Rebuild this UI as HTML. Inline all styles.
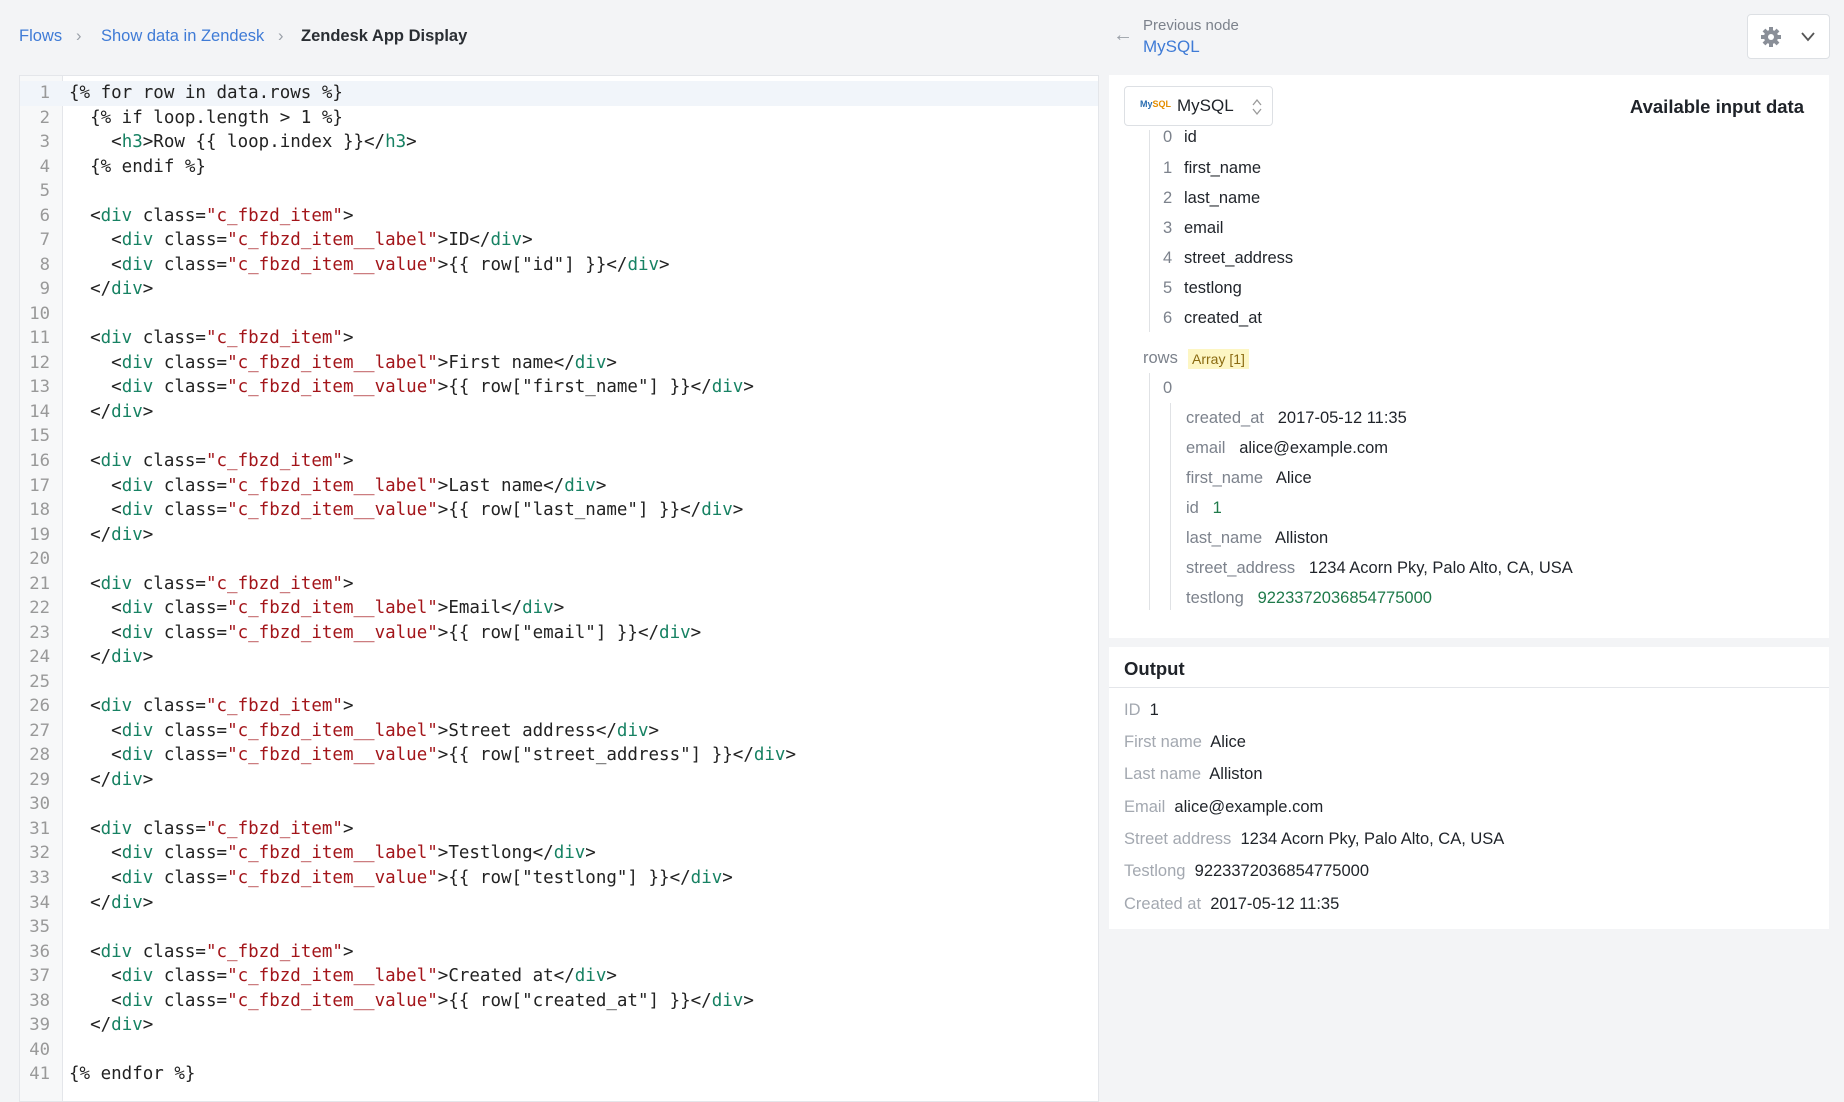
<!DOCTYPE html>
<html><head><meta charset="utf-8"><style>
*{margin:0;padding:0;box-sizing:border-box}
body{width:1844px;height:1102px;background:#f3f4f6;font-family:"Liberation Sans",sans-serif;position:relative;overflow:hidden;color:#1f2329}
.a{position:absolute;white-space:nowrap}
.bc{top:27px;font-size:16.5px}
.blue{color:#3f7bd6}
.sep{color:#9aa0a8}
#ed{position:absolute;left:19px;top:75px;width:1080px;height:1027px;background:#fff;border:1px solid #e4e6ea}
#gut{position:absolute;left:0;top:0;width:43px;height:100%;background:#f7f8f9;border-right:1px solid #e4e6ea}
.hl{position:absolute;left:0;top:5px;width:100%;height:25px;background:#f1f5fa}
pre{position:absolute;top:5px;font-family:"DejaVu Sans Mono",monospace;font-size:17.5px;line-height:24.53px;color:#222}
#nums{left:0;width:30px;text-align:right;color:#999;font-size:17.3px}
#code{left:49px}
.t{color:#178263}.s{color:#a3151a}
.panel{position:absolute;background:#fff}
.gray{color:#7c828c}
.f16{font-size:16.5px}
</style></head><body>
<div class="a bc blue" style="left:19px">Flows</div>
<div class="a bc sep" style="left:76px">›</div>
<div class="a bc blue" style="left:101px">Show data in Zendesk</div>
<div class="a bc sep" style="left:278px">›</div>
<div class="a bc" style="left:301px;font-weight:bold;color:#2a2e33">Zendesk App Display</div>

<div class="a" style="left:1113px;top:24px;font-size:20px;color:#9aa0a8">←</div>
<div class="a gray" style="left:1143px;top:17px;font-size:15px">Previous node</div>
<div class="a blue" style="left:1143px;top:37px;font-size:17px">MySQL</div>
<div class="a" style="left:1747px;top:14px;width:83px;height:45px;background:#fff;border:1px solid #dde0e4;border-radius:4px">
<svg width="83" height="45" style="position:absolute;left:0;top:0"><g transform="translate(23,22)" fill="#8a8f98"><circle r="7"/><g stroke="#8a8f98" stroke-width="4"><line x1="0" y1="-10" x2="0" y2="10"/><line x1="-10" y1="0" x2="10" y2="0"/><line x1="-7" y1="-7" x2="7" y2="7"/><line x1="-7" y1="7" x2="7" y2="-7"/></g><circle r="3" fill="#fff"/></g><path d="M54 18 L60 25 L66 18" fill="none" stroke="#555" stroke-width="1.8"/></svg></div>

<div id="ed"><div id="gut"></div><div class="hl"></div>
<pre id="nums">1
2
3
4
5
6
7
8
9
10
11
12
13
14
15
16
17
18
19
20
21
22
23
24
25
26
27
28
29
30
31
32
33
34
35
36
37
38
39
40
41</pre>
<pre id="code">{% for row in data.rows %}
  {% if loop.length &gt; 1 %}
    &lt;<span class="t">h3</span>&gt;Row {{ loop.index }}&lt;/<span class="t">h3</span>&gt;
  {% endif %}

  &lt;<span class="t">div</span> class=<span class="s">"c_fbzd_item"</span>&gt;
    &lt;<span class="t">div</span> class=<span class="s">"c_fbzd_item__label"</span>&gt;ID&lt;/<span class="t">div</span>&gt;
    &lt;<span class="t">div</span> class=<span class="s">"c_fbzd_item__value"</span>&gt;{{ row["id"] }}&lt;/<span class="t">div</span>&gt;
  &lt;/<span class="t">div</span>&gt;

  &lt;<span class="t">div</span> class=<span class="s">"c_fbzd_item"</span>&gt;
    &lt;<span class="t">div</span> class=<span class="s">"c_fbzd_item__label"</span>&gt;First name&lt;/<span class="t">div</span>&gt;
    &lt;<span class="t">div</span> class=<span class="s">"c_fbzd_item__value"</span>&gt;{{ row["first_name"] }}&lt;/<span class="t">div</span>&gt;
  &lt;/<span class="t">div</span>&gt;

  &lt;<span class="t">div</span> class=<span class="s">"c_fbzd_item"</span>&gt;
    &lt;<span class="t">div</span> class=<span class="s">"c_fbzd_item__label"</span>&gt;Last name&lt;/<span class="t">div</span>&gt;
    &lt;<span class="t">div</span> class=<span class="s">"c_fbzd_item__value"</span>&gt;{{ row["last_name"] }}&lt;/<span class="t">div</span>&gt;
  &lt;/<span class="t">div</span>&gt;

  &lt;<span class="t">div</span> class=<span class="s">"c_fbzd_item"</span>&gt;
    &lt;<span class="t">div</span> class=<span class="s">"c_fbzd_item__label"</span>&gt;Email&lt;/<span class="t">div</span>&gt;
    &lt;<span class="t">div</span> class=<span class="s">"c_fbzd_item__value"</span>&gt;{{ row["email"] }}&lt;/<span class="t">div</span>&gt;
  &lt;/<span class="t">div</span>&gt;

  &lt;<span class="t">div</span> class=<span class="s">"c_fbzd_item"</span>&gt;
    &lt;<span class="t">div</span> class=<span class="s">"c_fbzd_item__label"</span>&gt;Street address&lt;/<span class="t">div</span>&gt;
    &lt;<span class="t">div</span> class=<span class="s">"c_fbzd_item__value"</span>&gt;{{ row["street_address"] }}&lt;/<span class="t">div</span>&gt;
  &lt;/<span class="t">div</span>&gt;

  &lt;<span class="t">div</span> class=<span class="s">"c_fbzd_item"</span>&gt;
    &lt;<span class="t">div</span> class=<span class="s">"c_fbzd_item__label"</span>&gt;Testlong&lt;/<span class="t">div</span>&gt;
    &lt;<span class="t">div</span> class=<span class="s">"c_fbzd_item__value"</span>&gt;{{ row["testlong"] }}&lt;/<span class="t">div</span>&gt;
  &lt;/<span class="t">div</span>&gt;

  &lt;<span class="t">div</span> class=<span class="s">"c_fbzd_item"</span>&gt;
    &lt;<span class="t">div</span> class=<span class="s">"c_fbzd_item__label"</span>&gt;Created at&lt;/<span class="t">div</span>&gt;
    &lt;<span class="t">div</span> class=<span class="s">"c_fbzd_item__value"</span>&gt;{{ row["created_at"] }}&lt;/<span class="t">div</span>&gt;
  &lt;/<span class="t">div</span>&gt;

{% endfor %}</pre></div>

<div class="panel" style="left:1109px;top:75px;width:720px;height:563px"></div>
<div class="a" style="left:1124px;top:86px;width:149px;height:40px;background:#fff;border:1px solid #dde0e4;border-radius:4px">
<div class="a" style="left:15px;top:12px;font-size:9px;color:#2a6db0;font-weight:bold">My<span style="color:#e48e00">SQL</span></div>
<div class="a" style="left:52px;top:9px;font-size:17px">MySQL</div>
<svg class="a" style="left:126px;top:11px" width="12" height="18"><path d="M2 7 L6 2 L10 7 M2 11 L6 16 L10 11" fill="none" stroke="#999" stroke-width="1.3"/></svg></div>
<div class="a" style="right:40px;top:96px;font-size:18.5px;font-weight:bold;color:#1f2329">Available input data</div>

<div class="a" style="left:1149px;top:130px;width:1px;height:202px;background:#e0e2e5"></div>
<div class="f16">
<div class="a gray" style="left:1163px;top:128px">0</div><div class="a" style="left:1184px;top:128px">id</div>
<div class="a gray" style="left:1163px;top:159px">1</div><div class="a" style="left:1184px;top:159px">first_name</div>
<div class="a gray" style="left:1163px;top:189px">2</div><div class="a" style="left:1184px;top:189px">last_name</div>
<div class="a gray" style="left:1163px;top:219px">3</div><div class="a" style="left:1184px;top:219px">email</div>
<div class="a gray" style="left:1163px;top:249px">4</div><div class="a" style="left:1184px;top:249px">street_address</div>
<div class="a gray" style="left:1163px;top:279px">5</div><div class="a" style="left:1184px;top:279px">testlong</div>
<div class="a gray" style="left:1163px;top:309px">6</div><div class="a" style="left:1184px;top:309px">created_at</div>
<div class="a gray" style="left:1143px;top:349px">rows</div>
<div class="a" style="left:1188px;top:349px;background:#fdf6c3;color:#8a6a10;font-size:14px;padding:2px 4px">Array [1]</div>
<div class="a" style="left:1149px;top:373px;width:1px;height:237px;background:#e0e2e5"></div>
<div class="a gray" style="left:1163px;top:379px">0</div>
<div class="a" style="left:1170px;top:403px;width:1px;height:207px;background:#e0e2e5"></div>
<div class="a" style="left:1186px;top:409px"><span class="gray">created_at</span>&nbsp;&nbsp; 2017-05-12 11:35</div>
<div class="a" style="left:1186px;top:439px"><span class="gray">email</span>&nbsp;&nbsp; alice@example.com</div>
<div class="a" style="left:1186px;top:469px"><span class="gray">first_name</span>&nbsp;&nbsp; Alice</div>
<div class="a" style="left:1186px;top:499px"><span class="gray">id</span>&nbsp;&nbsp; <span style="color:#1f7a4a">1</span></div>
<div class="a" style="left:1186px;top:529px"><span class="gray">last_name</span>&nbsp;&nbsp; Alliston</div>
<div class="a" style="left:1186px;top:559px"><span class="gray">street_address</span>&nbsp;&nbsp; 1234 Acorn Pky, Palo Alto, CA, USA</div>
<div class="a" style="left:1186px;top:589px"><span class="gray">testlong</span>&nbsp;&nbsp; <span style="color:#1f7a4a">9223372036854775000</span></div>
</div>

<div class="panel" style="left:1109px;top:647px;width:720px;height:282px">
<div class="a" style="left:15px;top:11px;font-size:18.5px;font-weight:bold">Output</div>
<div class="a" style="left:0;top:40px;width:720px;height:1px;background:#e4e6ea"></div>
<div class="f16">
<div class="a" style="left:15px;top:54px"><span style="color:#a3a8b0">ID</span>&nbsp; 1</div>
<div class="a" style="left:15px;top:86px"><span style="color:#a3a8b0">First name</span>&nbsp; Alice</div>
<div class="a" style="left:15px;top:118px"><span style="color:#a3a8b0">Last name</span>&nbsp; Alliston</div>
<div class="a" style="left:15px;top:151px"><span style="color:#a3a8b0">Email</span>&nbsp; alice@example.com</div>
<div class="a" style="left:15px;top:183px"><span style="color:#a3a8b0">Street address</span>&nbsp; 1234 Acorn Pky, Palo Alto, CA, USA</div>
<div class="a" style="left:15px;top:215px"><span style="color:#a3a8b0">Testlong</span>&nbsp; 9223372036854775000</div>
<div class="a" style="left:15px;top:248px"><span style="color:#a3a8b0">Created at</span>&nbsp; 2017-05-12 11:35</div>
</div></div>
</body></html>
